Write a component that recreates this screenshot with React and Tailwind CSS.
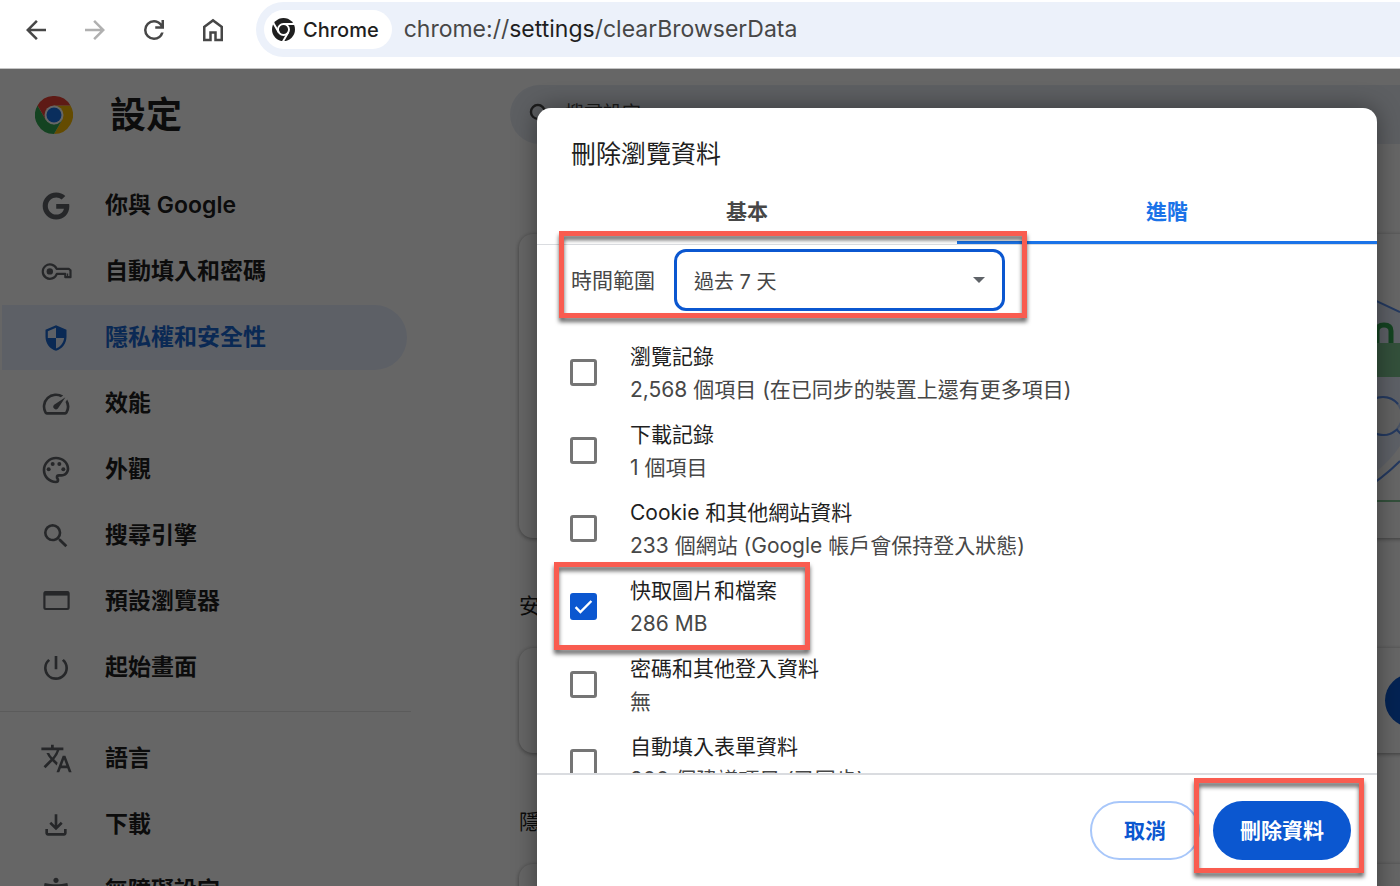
import { useState } from "react";
import { FaGoogle } from "react-icons/fa";
import {
  MdAccessibilityNew,
  MdOutlineFileDownload,
  MdOutlinePalette,
  MdPowerSettingsNew,
  MdSearch,
  MdSecurity,
  MdSpeed,
  MdTranslate,
} from "react-icons/md";

// Material Symbols use a 960 grid with a flipped origin
function Symbol({ d, className }) {
  return (
    <svg viewBox="0 -960 960 960" fill="currentColor" className={className} aria-hidden="true">
      <path d={d} />
    </svg>
  );
}

const NAV_ICONS = {
  back: "m313-440 224 224-57 56-320-320 320-320 57 56-224 224h487v80H313Z",
  forward: "M647-440H160v-80h487L423-744l57-56 320 320-320 320-57-56 224-224Z",
  reload:
    "M480-160q-134 0-227-93t-93-227q0-134 93-227t227-93q69 0 132 28.5T720-690v-110h80v280H520v-80h168q-32-56-87.5-88T480-720q-100 0-170 70t-70 170q0 100 70 170t170 70q77 0 139-44t87-116h84q-28 106-114 173t-196 67Z",
  home: "M240-200h120v-240h240v240h120v-360L480-740 240-560v360Zm-80 80v-480l320-240 320 240v480H520v-240h-80v240H160Z",
};

function KeyIcon({ className }) {
  return (
    <svg viewBox="0 0 33 33" fill="none" stroke="currentColor" strokeWidth="2.2" className={className} aria-hidden="true">
      <path d="M16.6 13.8h12.1l1.8 1.6v6.8h-5.2v-3.4h-8.5a7.2 7.2 0 1 1-.2-5z" strokeLinejoin="round" />
      <path d="M27.6 18.6v3.6" strokeWidth="1.2" />
      <circle cx="9.8" cy="16.4" r="3.2" fill="currentColor" stroke="none" />
    </svg>
  );
}

function BrowserIcon({ className }) {
  return (
    <svg viewBox="0 0 33 33" fill="none" stroke="currentColor" strokeWidth="2.2" className={className} aria-hidden="true">
      <rect x="4.4" y="7" width="24.2" height="17" rx="1.4" />
      <path d="M4.4 8.6h24.2" strokeWidth="4" />
    </svg>
  );
}

function ChromeLogo({ className }) {
  return (
    <svg viewBox="0 0 48 48" className={className} aria-hidden="true">
      <path d="M24 12h20.8A24 24 0 0 1 24 48l10.4-18z" fill="#fbbc04" />
      <path d="M3.2 12A24 24 0 0 0 24 48l10.4-18L24 36l-10.4-6z" fill="#34a853" />
      <path d="M3.2 12a24 24 0 0 1 41.6 0H24L13.6 30z" fill="#ea4335" />
      <circle cx="24" cy="24" r="12" fill="#fff" />
      <circle cx="24" cy="24" r="9.5" fill="#1a73e8" />
    </svg>
  );
}

function ChromeMono({ className }) {
  return (
    <svg viewBox="0 0 48 48" className={className} aria-hidden="true">
      <circle cx="24" cy="24" r="24" fill="#1f1f1f" />
      <g stroke="#fff" strokeWidth="4" fill="none">
        <circle cx="24" cy="24" r="11.5" />
        <path d="M24 12.5h23M14 29.8 2.5 9.8M34 29.8 22.5 49.7" />
      </g>
    </svg>
  );
}

const MENU = [
  { label: "你與 Google", icon: FaGoogle, size: "size-7" },
  { label: "自動填入和密碼", icon: KeyIcon, size: "size-[33px]" },
  { label: "隱私權和安全性", icon: MdSecurity, size: "size-7", active: true },
  { label: "效能", icon: MdSpeed, size: "size-8" },
  { label: "外觀", icon: MdOutlinePalette, size: "size-8" },
  { label: "搜尋引擎", icon: MdSearch, size: "size-8" },
  { label: "預設瀏覽器", icon: BrowserIcon, size: "size-[33px]" },
  { label: "起始畫面", icon: MdPowerSettingsNew, size: "size-8" },
];

const MENU_EXTRA = [
  { label: "語言", icon: MdTranslate, size: "size-[33px]" },
  { label: "下載", icon: MdOutlineFileDownload, size: "size-8" },
  { label: "無障礙設定", icon: MdAccessibilityNew, size: "size-8" },
];

const ITEMS = [
  { id: "history", label: "瀏覽記錄", detail: "2,568 個項目 (在已同步的裝置上還有更多項目)" },
  { id: "downloads", label: "下載記錄", detail: "1 個項目" },
  { id: "cookies", label: "Cookie 和其他網站資料", detail: "233 個網站 (Google 帳戶會保持登入狀態)" },
  { id: "cache", label: "快取圖片和檔案", detail: "286 MB", marked: true },
  { id: "passwords", label: "密碼和其他登入資料", detail: "無" },
  { id: "forms", label: "自動填入表單資料", detail: "200 個建議項目 (已同步)" },
];

function Marker({ className }) {
  return (
    <div
      className={`pointer-events-none absolute z-10 border-[5px] border-[#f95c50] drop-shadow-[0_4px_2px_rgba(0,0,0,0.6)] ${className}`}
    />
  );
}

function Toolbar() {
  return (
    <header className="flex h-[69px] shrink-0 items-start border-b border-[#c4c4c4] bg-white pt-[2px] text-[#474747]">
      <nav className="flex h-[55px] shrink-0 items-center gap-[29px] pl-[21px]">
        <button aria-label="返回"><Symbol d={NAV_ICONS.back} className="size-[30px]" /></button>
        <button aria-label="前進" disabled className="text-[#b0b0b0]">
          <Symbol d={NAV_ICONS.forward} className="size-[30px]" />
        </button>
        <button aria-label="重新載入"><Symbol d={NAV_ICONS.reload} className="size-[30px]" /></button>
        <button aria-label="首頁"><Symbol d={NAV_ICONS.home} className="size-[30px]" /></button>
      </nav>
      <div className="ml-7 flex h-[55px] flex-1 items-center rounded-l-full bg-[#ecf1fa] pl-2">
        <div className="flex h-[39px] items-center gap-2 rounded-full bg-white pr-[13px] pl-2 text-[#1f1f1f]">
          <ChromeMono className="size-[23px]" />
          <span className="text-[20px] font-medium">Chrome</span>
        </div>
        <div className="ml-3 text-[23px]">
          chrome://<span className="text-[#1f1f1f]">settings</span>/clearBrowserData
        </div>
      </div>
    </header>
  );
}

function MenuItem({ item }) {
  const Icon = item.icon;
  return (
    <a
      href="#"
      className={`ml-[2px] flex h-[65px] items-center rounded-r-full text-[23px] font-semibold ${
        item.active ? "bg-[#e8f0fe] text-[#1967d2]" : "text-[#1f1f1f]"
      }`}
    >
      <span className={`flex w-[103px] shrink-0 justify-center pl-[5px] ${item.active ? "" : "text-[#5f6368]"}`}>
        <Icon className={item.size} />
      </span>
      {item.label}
    </a>
  );
}

function Sidebar() {
  return (
    <aside className="w-[411px] shrink-0">
      <div className="flex h-[92px] items-center gap-[37px] pl-[35px]">
        <ChromeLogo className="size-[38px]" />
        <h1 className="text-[36px] font-semibold text-[#1f1f1f]">設定</h1>
      </div>
      <nav className="mt-[12px] flex flex-col gap-px pr-[4px]">
        {MENU.map((item) => (
          <MenuItem key={item.label} item={item} />
        ))}
      </nav>
      <hr className="mt-[11px] mb-[14px] border-[#e3e3e3]" />
      <nav className="flex flex-col gap-px pr-[4px]">
        {MENU_EXTRA.map((item) => (
          <MenuItem key={item.label} item={item} />
        ))}
      </nav>
    </aside>
  );
}

function Illustration() {
  return (
    <svg viewBox="0 0 60 223" className="h-[223px] w-[60px]" fill="none" aria-hidden="true">
      <path d="M0 4 60 32v134q-20 30-60 46z" fill="#e8f0fe" />
      <path d="m0 4 60 28M20 212q22-13 40-31" stroke="#5b8fee" strokeWidth="2" />
      <path d="M37 63V51q0-6 7-6t7 6v12" stroke="#34a853" strokeWidth="5" />
      <path d="M10 63h50v34H10z" fill="#81c995" />
      <circle cx="43" cy="136" r="19" fill="#f5f5f5" stroke="#b4ccf8" strokeWidth="2" />
      <path d="M58 124q-6-7-15-7a19 19 0 1 0 12 34l3-2M57 150l4 4" stroke="#5b8fee" strokeWidth="2" />
      <path d="M0 221h60" stroke="#81c995" strokeWidth="2" />
    </svg>
  );
}

function Content() {
  const card = "-mr-4 rounded-[14px] bg-white shadow-[0_1px_4px_rgba(0,0,0,0.4)]";
  return (
    <main className="ml-[99px] min-w-0 flex-1 pt-4 text-[21px] text-[#1f1f1f]">
      <label className="-mr-4 flex h-[59px] items-center gap-[9px] rounded-l-full bg-[#e9eef6] pl-4 text-[#474747]">
        <MdSearch className="size-[30px] shrink-0" />
        <input type="search" aria-label="搜尋設定" placeholder="搜尋設定" className="min-w-0 flex-1 text-[19px] outline-none placeholder:text-[#474747]" />
      </label>
      <div className="ml-[9px]">
        <section className={`${card} mt-[90px] flex h-[304px] justify-end pt-[46px] pr-4`}>
          <Illustration />
        </section>
        <h2 className="mt-[50px] leading-9">安全檢查</h2>
        <section className={`${card} mt-6 flex h-[105px] items-center justify-end`}>
          <button aria-label="前往安全檢查" className="h-[53px] w-[31px] rounded-l-full bg-[#0b57d0]" />
        </section>
        <h2 className="mt-[51px] leading-9">隱私權和安全性</h2>
        <section className={`${card} mt-6 h-[105px]`} />
      </div>
    </main>
  );
}

function ClearDataDialog() {
  const [checked, setChecked] = useState({ cache: true });
  const [tab, setTab] = useState("advanced");

  const tabClass = (id) =>
    `flex-1 border-b-[3px] pt-[2px] font-semibold ${
      tab === id ? "rounded-t-[3px] border-[#1a73e8] text-[#1a73e8]" : "border-transparent text-[#474747]"
    }`;

  return (
    <div
      role="dialog"
      aria-labelledby="dialog-title"
      className="mt-[39px] mr-[23px] w-[60%] self-start rounded-[14px] bg-white pt-7 text-[21px] text-[#1f1f1f] shadow-[0_0_24px_rgba(0,0,0,0.4)]"
    >
      <h2 id="dialog-title" className="px-[34px] text-[25px] leading-9">刪除瀏覽資料</h2>

      <div role="tablist" className="mt-[9px] flex h-16 border-b border-[#dadce0]">
        <button role="tab" aria-selected={tab === "basic"} onClick={() => setTab("basic")} className={tabClass("basic")}>
          基本
        </button>
        <button role="tab" aria-selected={tab === "advanced"} onClick={() => setTab("advanced")} className={tabClass("advanced")}>
          進階
        </button>
      </div>

      <div className="relative flex items-center gap-[19px] pt-1 pl-[34px] text-[#474747]">
        <label htmlFor="range" className="pt-[2px]">時間範圍</label>
        <div className="relative">
          <select
            id="range"
            defaultValue="7d"
            className="h-[62px] w-[331px] appearance-none rounded-xl border-[3px] border-[#0b57d0] bg-white pt-1 pl-[17px] text-[20px] outline-none"
          >
            <option value="1h">過去 1 小時</option>
            <option value="24h">過去 24 小時</option>
            <option value="7d">過去 7 天</option>
            <option value="4w">過去 4 週</option>
            <option value="all">不限時間</option>
          </select>
          <svg viewBox="0 0 12 6" className="pointer-events-none absolute top-7 right-5 h-[6px] w-3" aria-hidden="true">
            <path d="M0 0h12L6 6z" fill="#5f6368" />
          </svg>
        </div>
        <Marker className="-top-[14px] left-[22px] h-[87px] w-[468px]" />
      </div>

      <ul className="mt-[22px] h-[440px] overflow-y-auto [scrollbar-width:none]">
        {ITEMS.map((item) => (
          <li key={item.id} className="relative">
            <label className="flex items-center py-[5px] pl-[33px]">
              <span className="relative size-[27px] shrink-0">
                <input
                  type="checkbox"
                  checked={!!checked[item.id]}
                  onChange={(e) => setChecked({ ...checked, [item.id]: e.target.checked })}
                  className="peer block size-full appearance-none rounded-[3px] border-[3px] border-[#757575] checked:border-[#0b57d0] checked:bg-[#0b57d0]"
                />
                <svg
                  viewBox="0 0 27 27"
                  fill="none"
                  stroke="#fff"
                  strokeWidth="2.4"
                  className="pointer-events-none absolute inset-0 hidden peer-checked:block"
                  aria-hidden="true"
                >
                  <path d="m5.6 14.2 4.8 4.8L21.4 8" />
                </svg>
              </span>
              <span className="ml-[33px] flex flex-col pt-[2px] leading-[33px]">
                <span>{item.label}</span>
                <span className="text-[#474747]">{item.detail}</span>
              </span>
            </label>
            {item.marked && <Marker className="-top-[5px] left-[17px] h-[88px] w-[256px]" />}
          </li>
        ))}
      </ul>

      <div className="flex justify-end gap-[13px] border-t-2 border-[#dadce0] pt-[26px] pr-[26px] pb-12">
        <button className="h-[59px] rounded-full border-2 border-[#a8c7fa] px-8 font-semibold text-[#0b57d0]">取消</button>
        <div className="relative">
          <button className="h-[59px] rounded-full bg-[#0b57d0] px-[27px] font-semibold text-white">刪除資料</button>
          <Marker className="-top-[23px] -left-[19px] h-[95px] w-[170px]" />
        </div>
      </div>
    </div>
  );
}

export default function App() {
  return (
    <div className="flex h-screen flex-col overflow-hidden bg-white font-[Inter,'Noto_Sans_CJK_TC',sans-serif]">
      <Toolbar />
      <div className="relative flex min-h-0 flex-1 overflow-hidden">
        <Sidebar />
        <Content />
        <div className="absolute inset-0 flex justify-end bg-black/60">
          <ClearDataDialog />
        </div>
      </div>
    </div>
  );
}
